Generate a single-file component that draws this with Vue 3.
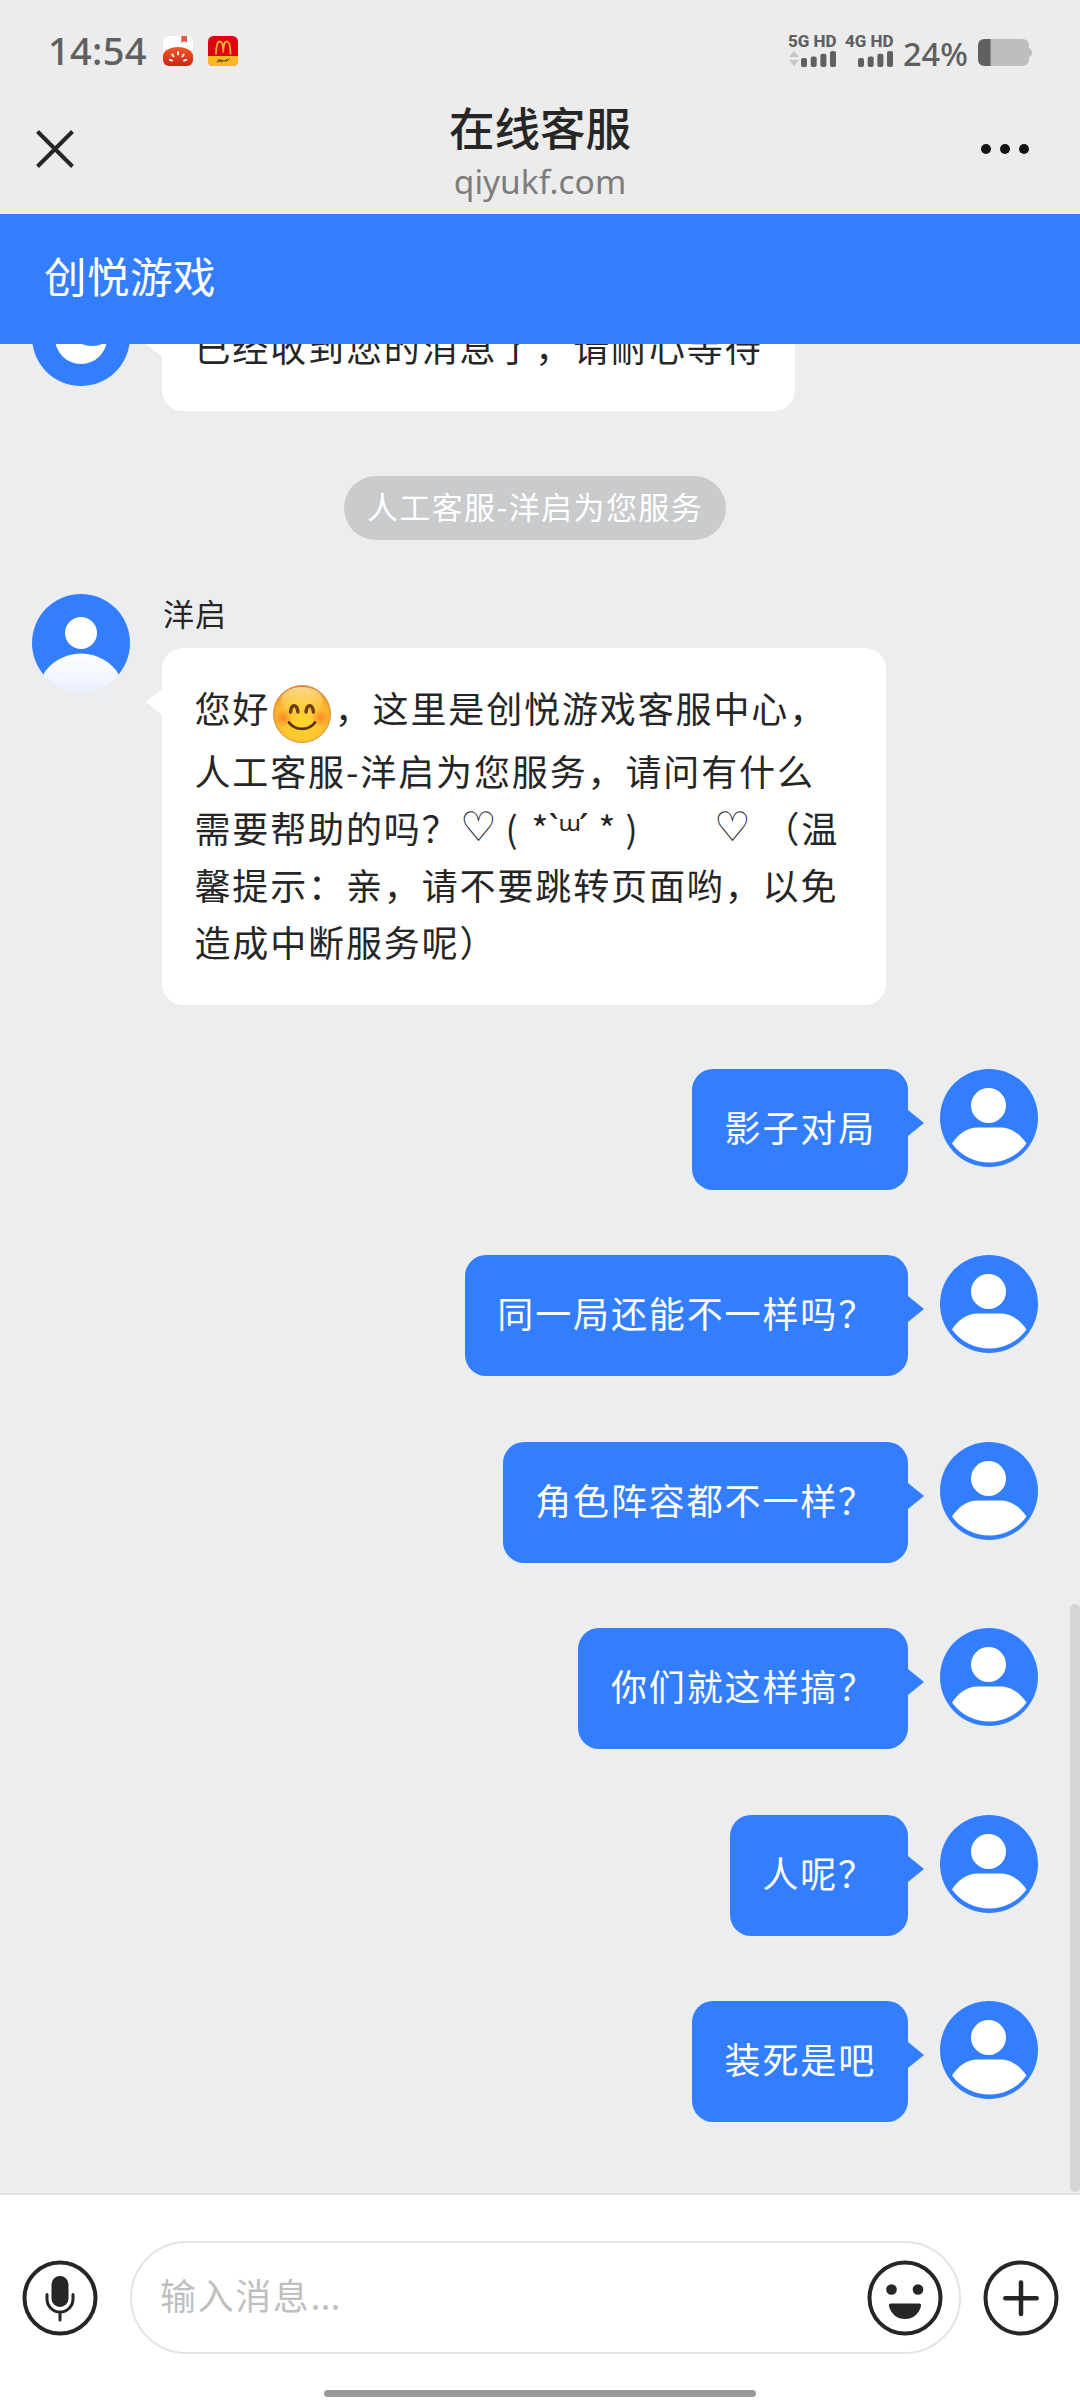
<script setup>
const replies = [
  '影子对局',
  '同一局还能不一样吗？',
  '角色阵容都不一样？',
  '你们就这样搞？',
  '人呢？',
  '装死是吧',
]
const networks = [
  { label: '5G HD', arrows: true },
  { label: '4G HD', arrows: false },
]
</script>

<template>
  <div class="screen">
    <header class="top">
      <div class="status">
        <div class="status-left">
          <span class="clock">14:54</span>
          <svg class="app-icon" viewBox="0 0 30 30">
            <defs>
              <clipPath id="tomato-clip"><rect width="30" height="30" rx="6" /></clipPath>
              <linearGradient id="tomato-fill" x1="0" y1="0" x2="0" y2="1">
                <stop offset="0" stop-color="#ee5a2c" />
                <stop offset="1" stop-color="#cf2412" />
              </linearGradient>
            </defs>
            <g clip-path="url(#tomato-clip)">
              <rect width="30" height="30" fill="#fff" />
              <path d="M18.3 0h5.7v7l-2.8-2-2.9 2z" fill="#e05a44" />
              <path d="M0 19C1 14 8 11 15 11s14 3 15 8v11H0z" fill="url(#tomato-fill)" />
              <g stroke="#fff" stroke-width="1.8" stroke-linecap="round">
                <path d="M15 16v2.400M9.200 18.400l1.400 2M20.800 18.400l-1.400 2M6.800 23.800l2.300.8M23.200 23.800l-2.300.8" />
              </g>
            </g>
          </svg>
          <svg class="app-icon" viewBox="0 0 30 30">
            <defs><clipPath id="arch-clip"><rect width="30" height="30" rx="5.5" /></clipPath></defs>
            <g clip-path="url(#arch-clip)">
              <rect width="30" height="30" fill="#dc0410" />
              <rect y="20" width="30" height="10" fill="#fbb822" />
              <path d="M8 18.500C8 10 9.500 5.300 11.700 5.300S15.200 10 15.200 16.500C15.200 10 16.500 5.300 18.700 5.300S22.500 10 22.500 18.500" fill="none" stroke="#ffb52e" stroke-width="1.7" />
              <path d="M9 26.500l2-3 .3 2.500 2-2.500 0 2.500 2.500-1.500 1 .8 1.800-2 0 2 1.500-1.800 1.500-.5" fill="none" stroke="#5a3a10" stroke-width="1" />
            </g>
          </svg>
        </div>
        <div class="status-right">
          <div v-for="n in networks" :key="n.label" class="network">
            <span class="net-label">{{ n.label }}</span>
            <svg class="bars" viewBox="0 0 47 17">
              <path v-if="n.arrows" d="M5 1l5 6H0zM5 16l5-6H0z" fill="#c6c6c6" />
              <g fill="#606060">
                <rect x="12" y="8" width="6" height="9" rx="2" />
                <rect x="21.700" y="6.500" width="6" height="10.500" rx="2" />
                <rect x="31.400" y="3.800" width="6" height="13.200" rx="2" />
                <rect x="41" y="1" width="6" height="16" rx="2" />
              </g>
            </svg>
          </div>
          <span class="percent">24%</span>
          <svg class="battery" viewBox="0 0 54 27">
            <path d="M7 0h37q7 0 7 7v2q3 1 3 4.500t-3 4.500v2q0 7-7 7H7q-7 0-7-7V7q0-7 7-7z" fill="#bdbdbd" />
            <path d="M12.500 0v27H7q-7 0-7-7V7q0-7 7-7z" fill="#606060" />
          </svg>
        </div>
      </div>
      <div class="nav">
        <svg class="close" viewBox="0 0 38 38"><path d="M1.500 1.500l35 35M36.500 1.500l-35 35" stroke="#262626" stroke-width="4" /></svg>
        <div class="titles">
          <h1>在线客服</h1>
          <p>qiyukf.com</p>
        </div>
        <svg class="more" viewBox="0 0 48 10">
          <g fill="#141414"><circle cx="5" cy="5" r="5" /><circle cx="24" cy="5" r="5" /><circle cx="43" cy="5" r="5" /></g>
        </svg>
      </div>
    </header>

    <div class="brand">创悦游戏</div>

    <main class="chat">
      <div class="row agent first">
        <svg class="avatar" viewBox="0 0 98 98">
          <circle cx="49" cy="49" r="49" fill="#337eff" />
          <circle cx="49" cy="50" r="26" fill="#fff" />
          <ellipse cx="60" cy="49" rx="16" ry="9" fill="#337eff" />
        </svg>
        <div class="bubble">已经收到您的消息了，请耐心等待</div>
      </div>

      <div class="notice">人工客服-洋启为您服务</div>

      <div class="row agent greeting">
        <svg class="avatar" viewBox="0 0 98 98">
          <defs>
            <clipPath id="agent-clip"><circle cx="49" cy="49" r="49" /></clipPath>
            <linearGradient id="agent-body" x1="0" y1="0" x2="0" y2="1">
              <stop offset="0" stop-color="#fff" />
              <stop offset="1" stop-color="#e9f0ff" />
            </linearGradient>
          </defs>
          <g clip-path="url(#agent-clip)">
            <rect width="98" height="81" fill="#337eff" />
            <path d="M11 81C18 68 33 59.500 49 59.500S80 68 87 81L84 98H14z" fill="url(#agent-body)" />
            <circle cx="49" cy="39" r="16" fill="#fff" />
          </g>
        </svg>
        <div class="stack">
          <span class="name">洋启</span>
          <div class="bubble">
            <p class="line tall">您好<svg class="smile" viewBox="0 0 58 58">
              <defs>
                <radialGradient id="smile-face" cx=".5" cy=".62" r=".6">
                  <stop offset="0" stop-color="#ffd52e" />
                  <stop offset=".6" stop-color="#fdc630" />
                  <stop offset=".88" stop-color="#f6a92c" />
                  <stop offset="1" stop-color="#d98a2e" />
                </radialGradient>
                <linearGradient id="smile-shine" x1="0" y1="0" x2="0" y2="1">
                  <stop offset="0" stop-color="#fff0b0" stop-opacity=".75" />
                  <stop offset="1" stop-color="#ffe27a" stop-opacity="0" />
                </linearGradient>
                <radialGradient id="smile-cheek">
                  <stop offset="0" stop-color="#ff6a2a" stop-opacity=".75" />
                  <stop offset="1" stop-color="#ff7a2a" stop-opacity="0" />
                </radialGradient>
              </defs>
              <circle cx="29" cy="29" r="28.500" fill="url(#smile-face)" stroke="#dc8c3c" />
              <ellipse cx="29" cy="15" rx="21" ry="13" fill="url(#smile-shine)" />
              <circle cx="10.500" cy="33" r="9.500" fill="url(#smile-cheek)" />
              <circle cx="47.500" cy="33" r="9.500" fill="url(#smile-cheek)" />
              <g fill="none" stroke-linecap="round">
                <path d="M17.500 27c.8-8.500 6.400-8.500 7.500 0M33 27c.8-8.500 6.400-8.500 7.500 0" stroke="#6b3f12" stroke-width="3.500" />
                <path d="M16 37.500c6 8.500 20 8.500 26 0" stroke="#5b340e" stroke-width="2.800" />
              </g>
            </svg>，这里是创悦游戏客服中心，</p>
            <p class="line">人工客服-洋启为您服务，请问有什么</p>
            <p class="line kaomoji">需要帮助的吗？<span class="heart">♡</span><span class="paren">(</span><span class="star">*</span><span class="tick">`</span><span class="mouth">ᵚ</span><span class="tick">´</span><span class="star wide">*</span><span class="paren end">)</span><span class="heart last">♡</span>（温</p>
            <p class="line">馨提示：亲，请不要跳转页面哟，以免</p>
            <p class="line">造成中断服务呢）</p>
          </div>
        </div>
      </div>

      <div v-for="text in replies" :key="text" class="row user">
        <div class="bubble">{{ text }}</div>
        <svg class="avatar" viewBox="0 0 98 98">
          <circle cx="49" cy="49" r="49" fill="#337eff" />
          <circle cx="48.500" cy="36.500" r="17.500" fill="#fff" />
          <path d="M12 74.500C18 65.500 26 58.500 38 58.500H60C72 58.500 80 65.500 86.500 74.500A46 46 0 0 1 12 74.500z" fill="#fff" />
        </svg>
      </div>
      <div class="scrollbar"></div>
    </main>

    <footer class="composer">
      <div class="controls">
        <svg class="icon" viewBox="0 0 76 76">
          <circle cx="38" cy="38" r="35.500" fill="none" stroke="#262626" stroke-width="4" />
          <rect x="29.500" y="16" width="17" height="31" rx="8.500" fill="#262626" />
          <path d="M25 34.500v4.500a13 13 0 0 0 26 0v-4.500M38 52v8" fill="none" stroke="#262626" stroke-width="3" stroke-linecap="round" />
        </svg>
        <div class="field">
          <span>输入消息<i>...</i></span>
          <svg class="icon" viewBox="0 0 76 76">
            <circle cx="38" cy="38" r="35.500" fill="none" stroke="#262626" stroke-width="4" />
            <circle cx="24.500" cy="29.500" r="5.300" fill="#262626" />
            <circle cx="51" cy="29.500" r="5.300" fill="#262626" />
            <path d="M24 43.500H52Q54.500 43.500 54 46C52 54.500 45.500 59 38 59S24 54.500 22 46Q21.500 43.500 24 43.500z" fill="#262626" />
          </svg>
        </div>
        <svg class="icon" viewBox="0 0 76 76">
          <circle cx="38" cy="38" r="35.500" fill="none" stroke="#262626" stroke-width="4" />
          <path d="M22.300 38.300h31.400M38 22.600V54" stroke="#262626" stroke-width="4.500" stroke-linecap="round" />
        </svg>
      </div>
      <div class="home-bar"></div>
    </footer>
  </div>
</template>

<style>
body {
  margin: 0;
}
</style>

<style scoped>
.screen {
  width: 1080px;
  height: 2400px;
  display: flex;
  flex-direction: column;
  overflow: hidden;
  font-family: "Noto Sans CJK SC", sans-serif;
  color: #262626;
  background: #ebedef;
}
svg {
  display: block;
  flex: none;
}
h1,
p {
  margin: 0;
  font-weight: 400;
}

.top {
  height: 214px;
  flex: none;
  background: #ececec;
}
.status {
  height: 98px;
  display: flex;
  justify-content: space-between;
  color: #606060;
}
.status-left {
  display: flex;
  padding: 36px 0 0 48px;
}
.clock {
  width: 115px;
  margin-top: -8px;
  font: 500 38px/44px "Noto Sans", sans-serif;
  letter-spacing: 0.3px;
}
.app-icon {
  width: 30px;
  height: 30px;
  margin-right: 15px;
}
.status-right {
  display: flex;
  padding: 32px 48px 0 0;
}
.network {
  width: 47px;
  margin-right: 10px;
}
.net-label {
  display: block;
  height: 18px;
  margin-left: -1px;
  font: 800 17px/18px Roboto, sans-serif;
  white-space: nowrap;
}
.bars {
  width: 47px;
  height: 17px;
}
.percent {
  width: 75px;
  font: 500 32.5px/44px "Noto Sans", sans-serif;
  white-space: nowrap;
}
.battery {
  width: 54px;
  height: 27px;
  margin-top: 7px;
}
.nav {
  height: 116px;
  display: grid;
  grid-template-columns: 200px 1fr 200px;
}
.close {
  width: 38px;
  height: 38px;
  margin: 32px 0 0 35.5px;
}
.titles {
  text-align: center;
}
.titles h1 {
  font-size: 45.5px;
  line-height: 57px;
  font-weight: 500;
}
.titles p {
  margin-top: 6px;
  font: 33.5px/40px "Noto Sans", sans-serif;
  color: #7c7c7c;
}
.more {
  width: 48px;
  height: 10px;
  margin: 46px 51px 0 0;
  justify-self: end;
}

.brand {
  height: 130px;
  flex: none;
  padding-left: 44px;
  box-sizing: border-box;
  background: #337eff;
  color: #fff;
  font-size: 42.5px;
  line-height: 121px;
  letter-spacing: 0.5px;
}

.chat {
  position: relative;
  height: 1849px;
  flex: none;
  overflow: hidden;
  box-sizing: border-box;
}
.row {
  display: flex;
}
.agent {
  padding-left: 32px;
  gap: 32px;
}
.user {
  justify-content: flex-end;
  padding-right: 42px;
  gap: 32px;
  margin-bottom: 65.4px;
}
.avatar {
  width: 98px;
  height: 98px;
}
.bubble {
  position: relative;
  padding: 28px 32px 36px 32.5px;
  border-radius: 21px;
  background: #fff;
  font-size: 36px;
  line-height: 57px;
  letter-spacing: 1.87px;
  white-space: nowrap;
}
.bubble::before {
  content: "";
  position: absolute;
  top: 41px;
  left: -16px;
  border: 13px solid transparent;
  border-left-width: 0;
  border-right: 16px solid #fff;
}
.user .bubble {
  padding-top: 29px;
  padding-bottom: 35px;
  background: #337eff;
  color: #fff;
}
.user .bubble::before {
  left: auto;
  right: -16px;
  border-right: 0;
  border-left: 16px solid #337eff;
}
.first {
  margin-top: -56px;
}
.first .bubble {
  margin-top: 2px;
}
.notice {
  width: 382px;
  height: 64px;
  margin: 65px auto 53.500px 344px;
  border-radius: 32px;
  background: #c9cbcd;
  color: #fff;
  font-size: 31px;
  line-height: 60px;
  letter-spacing: 1.4px;
  text-align: center;
  white-space: nowrap;
}
.greeting {
  margin-bottom: 64px;
}
.name {
  display: block;
  height: 54.500px;
  font-size: 31px;
  line-height: 38px;
  letter-spacing: 1px;
  padding-left: 1px;
}
.greeting .bubble {
  width: 659.5px;
  padding-bottom: 35px;
}
.line {
  height: 57px;
}
.tall {
  display: flex;
  height: 66px;
  line-height: 62px;
}
.smile {
  width: 58px;
  height: 58px;
  margin: 9px 3.5px 0 3px;
}
.kaomoji {
  display: flex;
}
.kaomoji span {
  letter-spacing: 0;
}
.heart {
  width: 46px;
  font-family: "DejaVu Sans", sans-serif;
  font-weight: 200;
  font-size: 41px;
}
.last {
  width: 50px;
}
.paren {
  width: 26px;
}
.star {
  width: 17px;
}
.tick {
  width: 10px;
  font-family: "Noto Sans", sans-serif;
}
.mouth {
  width: 20px;
  font-family: "Noto Sans", sans-serif;
  font-size: 37px;
  text-align: center;
}
.wide {
  margin-left: 10px;
  width: 27px;
}
.end {
  width: 88px;
}
.scrollbar {
  position: absolute;
  top: 1260px;
  right: 0;
  width: 10px;
  height: 588px;
  border-radius: 5px;
  background: #d3d5d7;
}

.composer {
  flex: 1;
  background: #fff;
  border-top: 2px solid #e2e2e2;
}
.controls {
  display: flex;
  align-items: center;
  height: 113px;
  padding: 46px 21px 0 22px;
}
.icon {
  width: 76px;
  height: 76px;
}
.field {
  flex: 1;
  height: 113px;
  margin: 0 22px 0 32px;
  padding: 0 16px 0 28px;
  box-sizing: border-box;
  display: flex;
  align-items: center;
  justify-content: space-between;
  border: 2px solid #e4e4e4;
  border-radius: 57px;
  color: #bfbfbf;
  font-size: 36px;
  line-height: 50px;
  letter-spacing: 1.6px;
}
.field span {
  padding-bottom: 7px;
}
.field i {
  font-style: normal;
  letter-spacing: 0;
}
.home-bar {
  width: 432px;
  height: 7px;
  margin: 36px auto 0;
  border-radius: 4px;
  background: #999;
}
</style>
